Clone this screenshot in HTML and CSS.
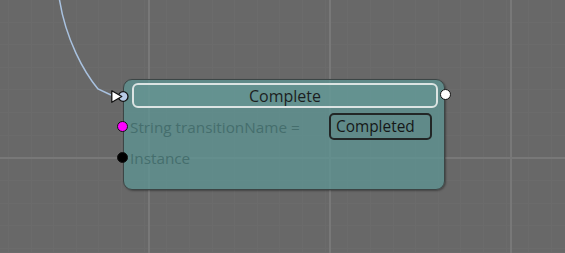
FILE: index.html
```html
<!DOCTYPE html>
<html>
<head>
<meta charset="utf-8">
<link rel="stylesheet" href="styles.css">
</head>
<body>
<div class="canvas">
  <svg class="wire" width="565" height="253" viewBox="0 0 565 253">
    <path d="M59.5 0 C66 40, 84 72, 98 89 L111 95" fill="none" stroke="#a9c2e0" stroke-width="1.5"/>
  </svg>
  <div class="node">
    <div class="header">
      <span class="pin-exec-in">
        <svg width="20" height="14" viewBox="0 0 20 14">
          <circle cx="12.2" cy="6.5" r="4.8" fill="#b8cbe6" stroke="#111" stroke-width="1.3"/>
          <path d="M0.8 0.8 L10.8 6.5 L0.8 12.2 Z" fill="#fff" stroke="#111" stroke-width="1.3" stroke-linejoin="round"/>
        </svg>
      </span>
      <div class="title">Complete</div>
      <span class="pin pin-out"></span>
    </div>
    <div class="row">
      <span class="pin pin-string"></span>
      <span class="label">String transitionName =</span>
      <div class="value">Completed</div>
    </div>
    <div class="row">
      <span class="pin pin-object"></span>
      <span class="label">Instance</span>
    </div>
  </div>
</div>
</body>
</html>
```
FILE: styles.css
```css
html, body {
  margin: 0;
  padding: 0;
}
body {
  width: 565px;
  height: 253px;
  overflow: hidden;
  font-family: "Open Sans", "Noto Sans", sans-serif;
}
.canvas {
  position: relative;
  width: 565px;
  height: 253px;
  background-color: #686868;
  background-image:
    linear-gradient(to right, transparent 148px, #787878 148px, #787878 150px, transparent 150px),
    linear-gradient(to right, transparent 329px, #787878 329px, #787878 331px, transparent 331px),
    linear-gradient(to right, transparent 510px, #787878 510px, #787878 512px, transparent 512px),
    linear-gradient(to bottom, transparent 157px, #787878 157px, #787878 159px, transparent 159px),
    repeating-linear-gradient(to right, #6b6b6b 0, #6b6b6b 1px, transparent 1px, transparent 22.625px),
    repeating-linear-gradient(to bottom, #6b6b6b 0, #6b6b6b 1px, transparent 1px, transparent 22.625px);
  background-position: 0 0, 0 0, 0 0, 0 0, 8px 0, 0 -1px;
}
.wire {
  position: absolute;
  left: 0;
  top: 0;
}
.node {
  position: absolute;
  left: 123px;
  top: 79px;
  width: 322px;
  height: 111px;
  border: 1px solid #3c4545;
  border-radius: 9px;
  background: rgba(93, 149, 148, 0.75);
  box-shadow: 1px 1px 2px rgba(0, 0, 0, 0.35);
  display: flex;
  flex-direction: column;
  padding: 3px 6px 0 6px;
  box-sizing: border-box;
}
.header {
  position: relative;
  height: 25px;
  box-sizing: border-box;
  border: 2px solid #dce4e3;
  border-radius: 6px;
  background: rgba(110, 160, 158, 0.35);
  margin-left: 2px;
  display: flex;
  align-items: center;
  justify-content: center;
}
.title {
  font-size: 16px;
  color: #1c1f1f;
  line-height: 20px;
}
.pin-exec-in {
  position: absolute;
  left: -23px;
  top: 5px;
  width: 20px;
  height: 14px;
  display: block;
}
.pin-exec-in svg { display: block; }
.pin {
  position: absolute;
  width: 11px;
  height: 11px;
  border-radius: 50%;
  box-sizing: border-box;
  border: 1.5px solid #111;
}
.pin-out {
  right: -15px;
  top: 4px;
  background: #fff;
}
.row {
  position: relative;
  height: 31px;
  display: flex;
  align-items: center;
  justify-content: space-between;
}
.header + .row { margin-top: 3px; }
.label {
  font-size: 15.3px;
  color: #456e6d;
  line-height: 20px;
}
.pin-string {
  left: -13.5px;
  top: 10px;
  background: #ff00ff;
}
.pin-object {
  left: -13.5px;
  top: 10px;
  background: #000;
}
.value {
  width: 103px;
  height: 27px;
  box-sizing: border-box;
  border: 2px solid #222626;
  border-radius: 5px;
  font-size: 15.4px;
  color: #151818;
  line-height: 23px;
  padding-left: 5px;
  margin-right: 6px;
}
```
